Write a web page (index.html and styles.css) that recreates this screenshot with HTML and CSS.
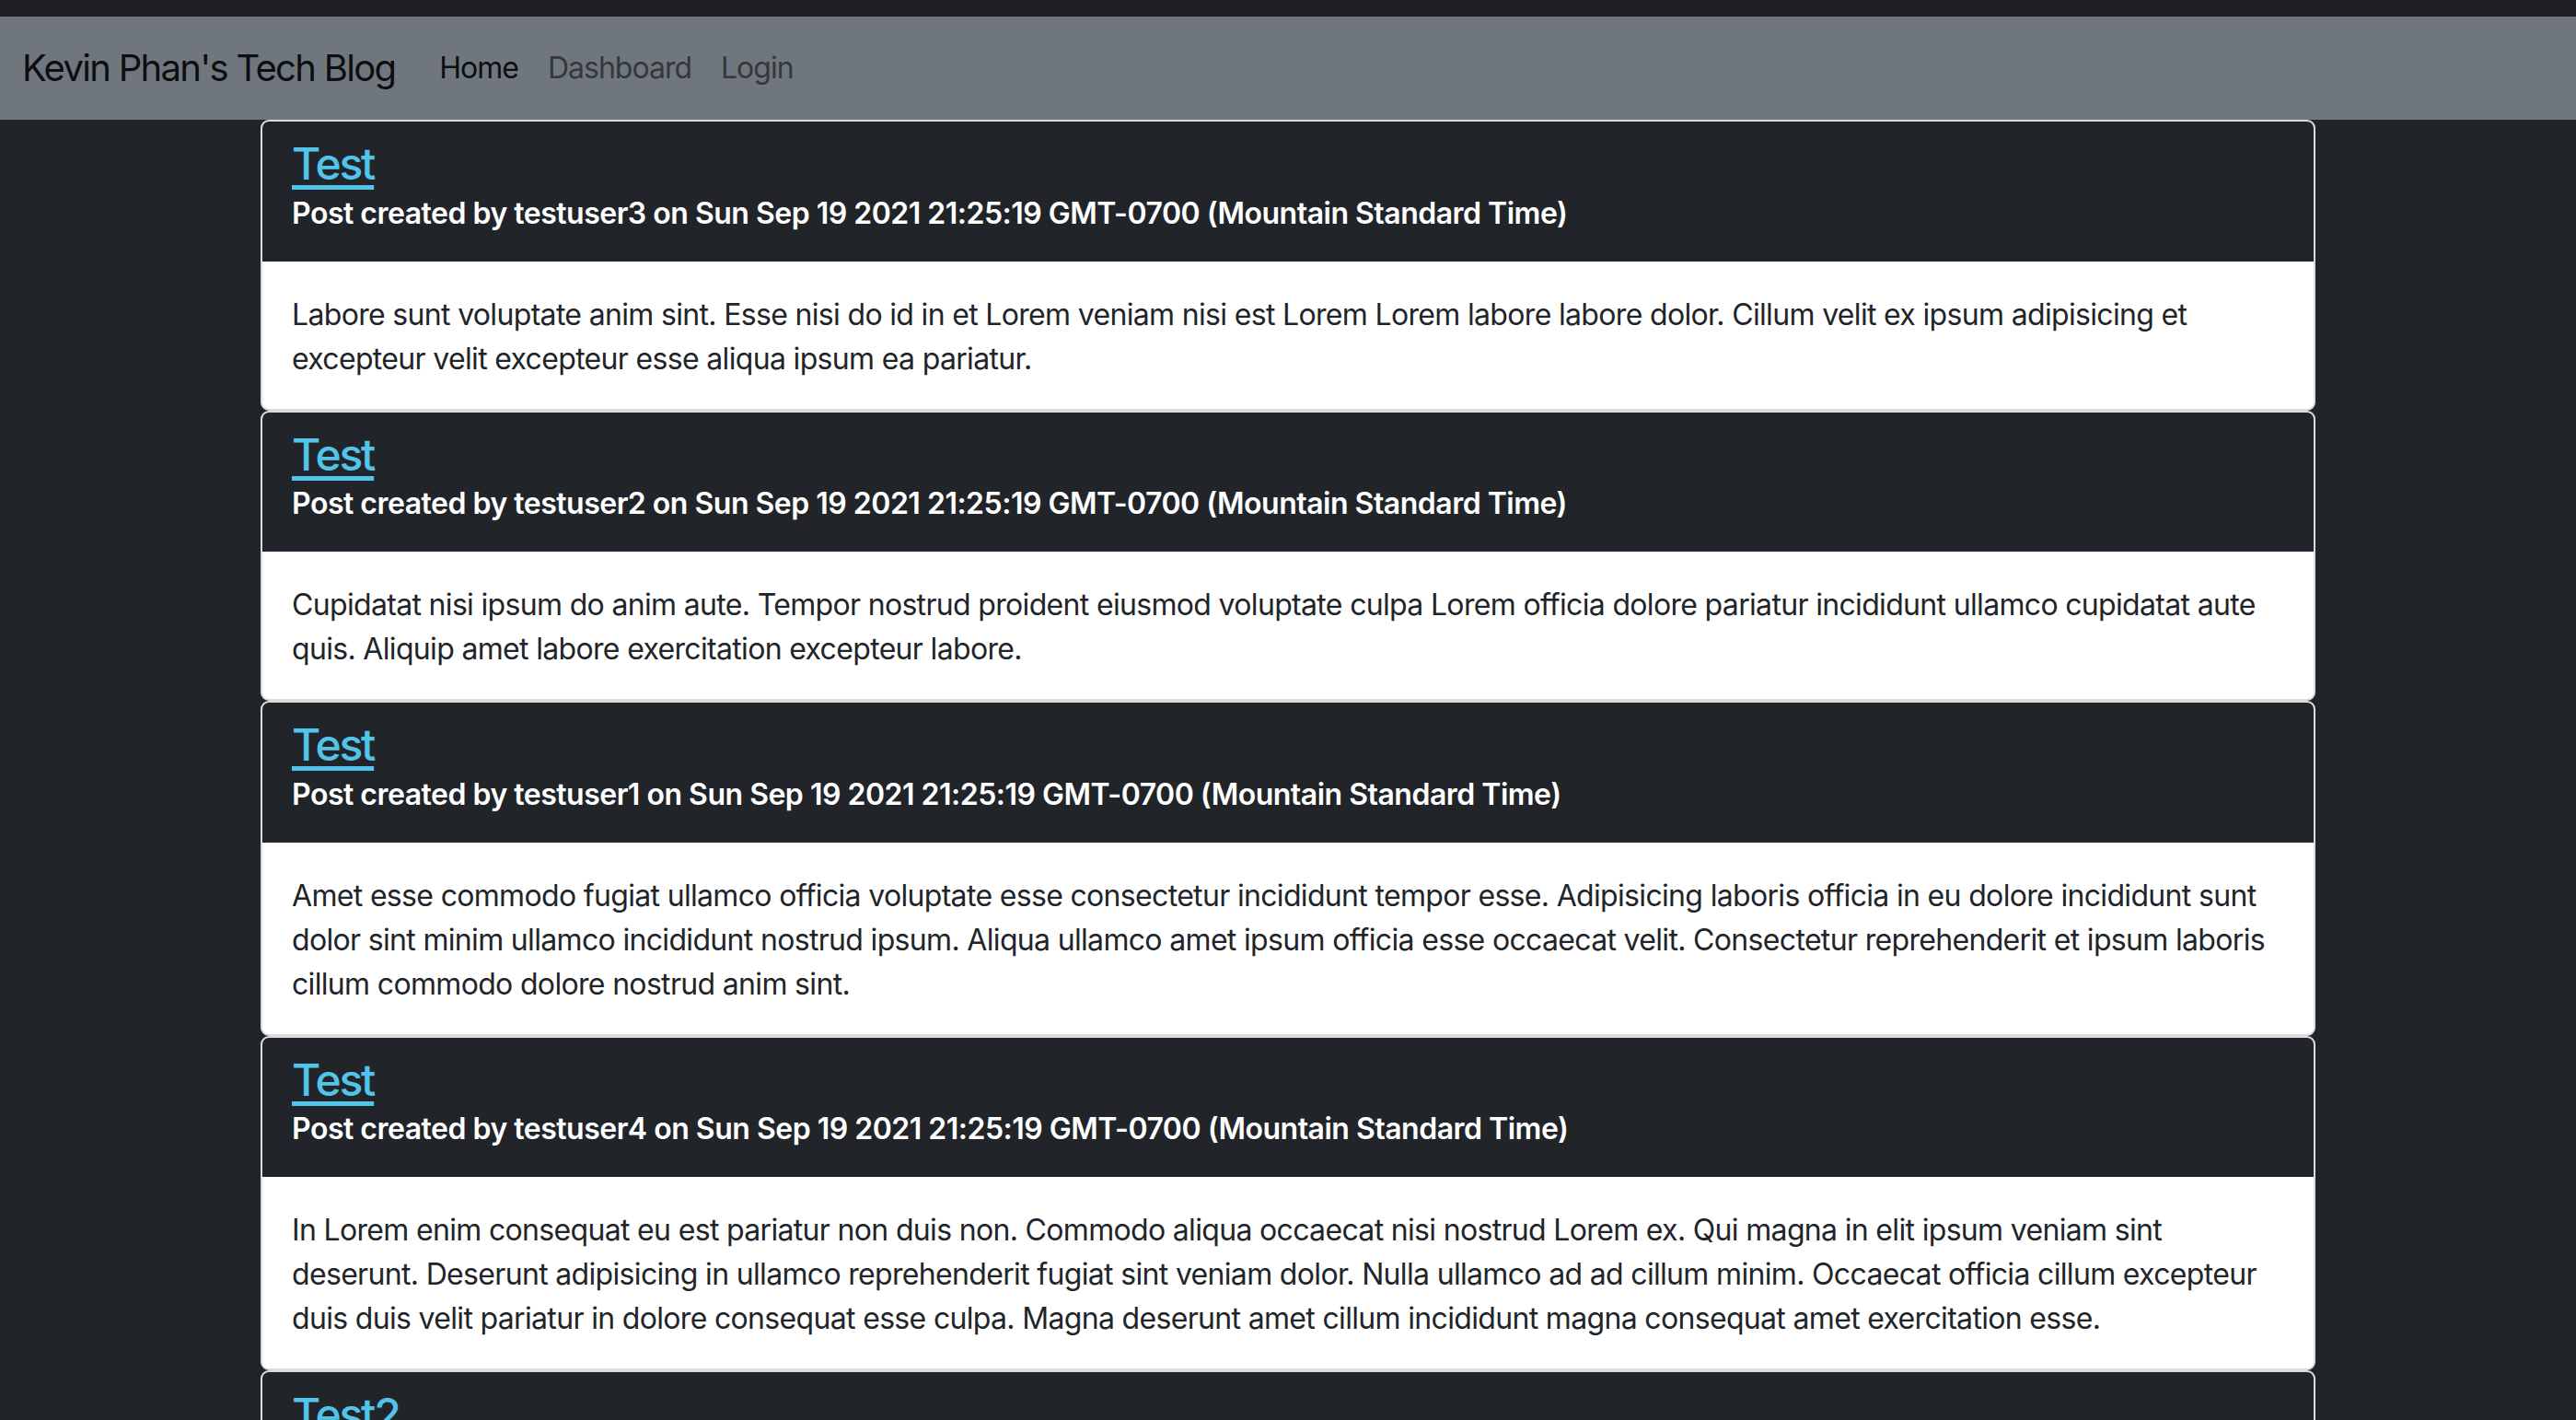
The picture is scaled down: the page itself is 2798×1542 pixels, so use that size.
FILE: index.html
```html
<!DOCTYPE html>
<html lang="en">
<head>
<meta charset="utf-8">
<title>Kevin Phan's Tech Blog</title>
<link rel="stylesheet" href="styles.css">
</head>
<body>
<header class="site-header">
  <nav class="navbar">
    <a class="brand" href="#">Kevin Phan's Tech Blog</a>
    <ul class="nav-list">
      <li><a class="nav-link active" href="#">Home</a></li>
      <li><a class="nav-link" href="#">Dashboard</a></li>
      <li><a class="nav-link" href="#">Login</a></li>
    </ul>
  </nav>
</header>
<main class="container">
  <article class="card">
    <div class="card-header">
      <h4 class="post-title"><a href="#">Test</a></h4>
      <p class="post-meta">Post created by testuser3 on Sun Sep 19 2021 21:25:19 GMT-0700 (Mountain Standard Time)</p>
    </div>
    <div class="card-body">
      <p>Labore sunt voluptate anim sint. Esse nisi do id in et Lorem veniam nisi est Lorem Lorem labore labore dolor. Cillum velit ex ipsum adipisicing et excepteur velit excepteur esse aliqua ipsum ea pariatur.</p>
    </div>
  </article>
  <article class="card">
    <div class="card-header">
      <h4 class="post-title"><a href="#">Test</a></h4>
      <p class="post-meta">Post created by testuser2 on Sun Sep 19 2021 21:25:19 GMT-0700 (Mountain Standard Time)</p>
    </div>
    <div class="card-body">
      <p>Cupidatat nisi ipsum do anim aute. Tempor nostrud proident eiusmod voluptate culpa Lorem officia dolore pariatur incididunt ullamco cupidatat aute quis. Aliquip amet labore exercitation excepteur labore.</p>
    </div>
  </article>
  <article class="card">
    <div class="card-header">
      <h4 class="post-title"><a href="#">Test</a></h4>
      <p class="post-meta">Post created by testuser1 on Sun Sep 19 2021 21:25:19 GMT-0700 (Mountain Standard Time)</p>
    </div>
    <div class="card-body">
      <p>Amet esse commodo fugiat ullamco officia voluptate esse consectetur incididunt tempor esse. Adipisicing laboris officia in eu dolore incididunt sunt dolor sint minim ullamco incididunt nostrud ipsum. Aliqua ullamco amet ipsum officia esse occaecat velit. Consectetur reprehenderit et ipsum laboris cillum commodo dolore nostrud anim sint.</p>
    </div>
  </article>
  <article class="card">
    <div class="card-header">
      <h4 class="post-title"><a href="#">Test</a></h4>
      <p class="post-meta">Post created by testuser4 on Sun Sep 19 2021 21:25:19 GMT-0700 (Mountain Standard Time)</p>
    </div>
    <div class="card-body">
      <p>In Lorem enim consequat eu est pariatur non duis non. Commodo aliqua occaecat nisi nostrud Lorem ex. Qui magna in elit ipsum veniam sint deserunt. Deserunt adipisicing in ullamco reprehenderit fugiat sint veniam dolor. Nulla ullamco ad ad cillum minim. Occaecat officia cillum excepteur duis duis velit pariatur in dolore consequat esse culpa. Magna deserunt amet cillum incididunt magna consequat amet exercitation esse.</p>
    </div>
  </article>
  <article class="card">
    <div class="card-header">
      <h4 class="post-title"><a href="#">Test2</a></h4>
      <p class="post-meta">Post created by testuser1 on Sun Sep 19 2021 21:25:19 GMT-0700 (Mountain Standard Time)</p>
    </div>
    <div class="card-body">
      <p>Test post content.</p>
    </div>
  </article>
</main>
</body>
</html>
```
FILE: styles.css
```css
* { box-sizing: border-box; }
html, body {
  margin: 0;
  padding: 0;
}
body {
  background: #212529;
  font-family: Inter, "Noto Sans", "Liberation Sans", sans-serif;
  font-size: 32px;
  line-height: 1.5;
  color: #212529;
}
.site-header {
  background: #1d1f22;
  padding-top: 18px;
}
.navbar {
  background: #6f767d;
  display: flex;
  align-items: center;
  padding: 16px 24px;
  height: 112px;
}
.brand {
  font-size: 40px;
  line-height: 60px;
  padding: 10px 0;
  margin-right: 32px;
  letter-spacing: -1.7px;
  color: rgba(0, 0, 0, 0.9);
  text-decoration: none;
}
.nav-list {
  display: flex;
  list-style: none;
  margin: 0;
  padding: 0;
}
.nav-link {
  display: block;
  padding: 16px 16px;
  font-size: 32px;
  line-height: 48px;
  letter-spacing: -1px;
  color: rgba(0, 0, 0, 0.55);
  text-decoration: none;
}
.nav-link.active {
  color: rgba(0, 0, 0, 0.9);
}
.container {
  width: 2280px;
  margin: 0 auto;
  padding: 0 24px;
  display: flex;
  flex-direction: column;
}
.card {
  border: 2px solid #dcdcdc;
  border-radius: 9px;
  background: #fff;
  overflow: hidden;
}
.card-header {
  background: #212529;
  color: #fff;
  padding: 16px 32px 28px;
}
.post-title {
  margin: 0;
  font-size: 48px;
  line-height: 59.6px;
  font-weight: 500;
  letter-spacing: -2.2px;
}
.post-title a {
  color: #52c4ea;
  text-decoration: underline;
  text-decoration-thickness: 5px;
  text-underline-offset: 6px;
}
.post-meta {
  margin: 0;
  font-size: 32px;
  line-height: 48px;
  font-weight: 600;
  letter-spacing: -0.5px;
}
.card-body {
  padding: 34px 32px 30px;
}
.card-body p {
  margin: 0;
  color: #212529;
  letter-spacing: -0.67px;
}
```
